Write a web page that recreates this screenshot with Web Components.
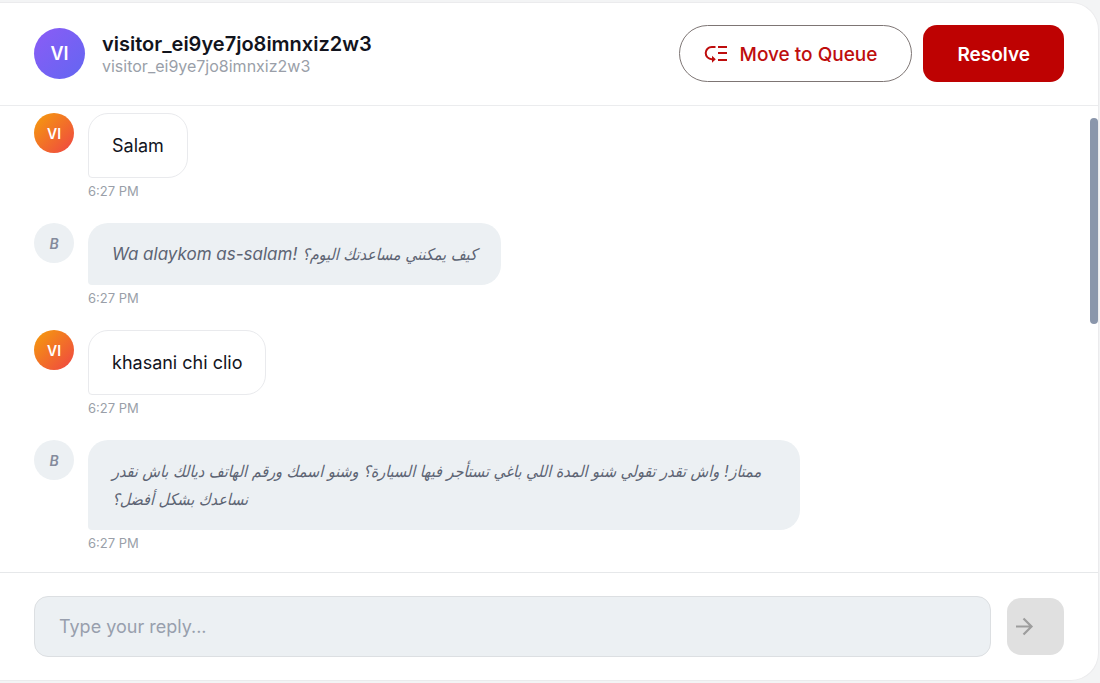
<!DOCTYPE html>
<html lang="en">
<head>
<meta charset="utf-8">
<meta name="viewport" content="width=device-width, initial-scale=1">
<title>Conversation</title>
<style>
  body { margin: 0; background: #f3f4f5; font-family: Inter, "DejaVu Sans", sans-serif; color: #12141d; }
</style>
</head>
<body>
<chat-panel>
  <chat-header slot="header" name="visitor_ei9ye7jo8imnxiz2w3" handle="visitor_ei9ye7jo8imnxiz2w3" initials="VI"></chat-header>
  <chat-message initials="VI" time="6:27 PM">Salam</chat-message>
  <chat-message bot initials="B" time="6:27 PM">Wa alaykom as-salam! <span lang="ar">كيف يمكنني مساعدتك اليوم؟</span></chat-message>
  <chat-message initials="VI" time="6:27 PM">khasani chi clio</chat-message>
  <chat-message bot initials="B" time="6:27 PM"><span lang="ar">ممتاز! واش تقدر تقولي شنو المدة اللي باغي تستأجر فيها السيارة؟ وشنو اسمك ورقم الهاتف ديالك باش نقدر نساعدك بشكل أفضل؟</span></chat-message>
  <chat-composer slot="footer"></chat-composer>
</chat-panel>
<script>
class ShadowElement extends HTMLElement {
  connectedCallback() {
    if (this.shadowRoot) return;
    this.attachShadow({ mode: "open" }).innerHTML = this.render();
  }
}

customElements.define("user-avatar", class extends ShadowElement {
  render() {
    return `<style>
      :host { display: flex; align-items: center; justify-content: center; flex: none;
        width: 40px; height: 40px; border-radius: 50%; color: #fff; font-size: 14px; font-weight: 600;
        background: linear-gradient(135deg, #f59e0b, #ef4444); }
      :host([kind="lead"]) { width: 51px; height: 51px; font-size: 18px;
        background: linear-gradient(135deg, #8b5cf6, #6366f1); }
      :host([kind="bot"]) { background: #ecf0f3; color: #848b9c; font-style: italic; }
    </style><slot></slot>`;
  }
});

customElements.define("action-button", class extends ShadowElement {
  render() {
    return `<style>
      :host { display: block; }
      button { display: flex; align-items: center; justify-content: center; gap: 12px; height: 57px;
        box-sizing: border-box; padding: 2px 34px 0; border: 0; border-radius: 14px; background: #be0202;
        color: #fff; font: inherit; font-size: 19px; font-weight: 600; white-space: nowrap; cursor: pointer; }
      :host([outlined]) button { padding: 2px 34px 0 24px; border: 1px solid #7d7574; border-radius: 29px;
        background: #fff; color: #be0d0d; font-weight: 500; }
    </style><button type="button"><slot name="icon"></slot><slot></slot></button>`;
  }
});

customElements.define("chat-header", class extends ShadowElement {
  render() {
    const a = n => this.getAttribute(n);
    return `<style>
      :host { display: flex; align-items: center; gap: 17px; padding: 22px 34px 23px; border-bottom: 1px solid #ebecee; }
      .who { flex: 1; min-width: 0; }
      h1 { margin: 0; font-size: 20px; line-height: 24px; font-weight: 600; }
      p { margin: 0; font-size: 16px; line-height: 20px; color: #9a9fa9; }
      .actions { display: flex; gap: 11px; }
      svg { display: block; }
    </style>
    <user-avatar kind="lead">${a("initials")}</user-avatar>
    <div class="who"><h1>${a("name")}</h1><p>${a("handle")}</p></div>
    <div class="actions">
      <action-button outlined>
        <svg slot="icon" width="24" height="24" viewBox="0 0 24 24" fill="none" stroke="currentColor" stroke-width="2" aria-hidden="true">
          <path d="M11.500 4H7.800a6 6 0 0 0 0 12.200h1M14 4h9M14 10h9M14 17h9"/>
          <path d="M8 12.700v7l3.800-3.500z" fill="currentColor" stroke="none"/>
        </svg>Move to Queue</action-button>
      <action-button>Resolve</action-button>
    </div>`;
  }
});

customElements.define("chat-message", class extends ShadowElement {
  render() {
    const bot = this.hasAttribute("bot");
    return `<style>
      :host { display: flex; align-items: flex-start; gap: 14px; }
      .body { display: flex; flex-direction: column; align-items: flex-start; flex: 1; min-width: 0; }
      .bubble { box-sizing: border-box; max-width: 73%; padding: 18px 23px; border: 1px solid #e9eaed;
        border-radius: 20px 20px 20px 4px; background: #fff; font-size: 18px; line-height: 27px; }
      :host([bot]) .bubble { padding: 17px 24px; border: 0; background: #ecf0f3; color: #5d6473;
        font-size: 17px; font-style: italic; line-height: 28px; }
      ::slotted([lang="ar"]) { font-family: "DejaVu Sans Condensed", "DejaVu Sans", sans-serif; font-size: 16px; line-height: 20px; }
      time { margin-top: 4px; font-size: 13px; line-height: 18px; color: #9a9fa9; }
    </style>
    <user-avatar ${bot ? 'kind="bot"' : ""}>${this.getAttribute("initials")}</user-avatar>
    <div class="body"><div class="bubble"><slot></slot></div><time>${this.getAttribute("time")}</time></div>`;
  }
});

customElements.define("chat-composer", class extends ShadowElement {
  render() {
    return `<style>
      :host { display: block; border-top: 1px solid #e6e8ea; }
      form { display: flex; align-items: center; gap: 16px; padding: 23px 34px; }
      input { flex: 1; min-width: 0; height: 61px; box-sizing: border-box; padding: 0 24px; outline: 0;
        border: 1px solid #dcdfe2; border-radius: 14px; background: #ecf0f3; color: #12141d; font: inherit; font-size: 18px; }
      input::placeholder { color: #989fad; opacity: 1; }
      button { display: flex; align-items: center; flex: none; width: 57px; height: 57px; padding: 0 5px; border: 0;
        border-radius: 14px; background: #e0e0e0; color: #9d9d9d; }
    </style>
    <form>
      <input type="text" aria-label="Reply" placeholder="Type your reply...">
      <button type="button" aria-label="Send" disabled>
        <svg width="24" height="24" viewBox="0 0 24 24" fill="none" stroke="currentColor" stroke-width="2.200" aria-hidden="true">
          <path d="M4 11.500h15.500M11.500 3.500l8 8-8 8"/>
        </svg>
      </button>
    </form>`;
  }
});

customElements.define("chat-panel", class extends ShadowElement {
  render() {
    return `<style>
      :host { display: flex; height: 100vh; box-sizing: border-box; padding: 2px 1px 2px 0; }
      section { display: flex; flex-direction: column; flex: 1; min-width: 0; overflow: hidden; background: #fff;
        border: 1px solid #ebebed; border-left: 0; border-radius: 0 28px 28px 0; }
      .view { position: relative; flex: 1; min-height: 0; display: flex; }
      .log { flex: 1; display: flex; flex-direction: column; gap: 23px; padding: 7px 34px; overflow-y: auto; scrollbar-width: none; }
      .thumb { position: absolute; top: 12px; right: 0; width: 8px; height: 206px; border-radius: 4px; background: #8a96ab; }
    </style>
    <section>
      <slot name="header"></slot>
      <div class="view"><div class="log"><slot></slot></div><div class="thumb"></div></div>
      <slot name="footer"></slot>
    </section>`;
  }
});
</script>
</body>
</html>
